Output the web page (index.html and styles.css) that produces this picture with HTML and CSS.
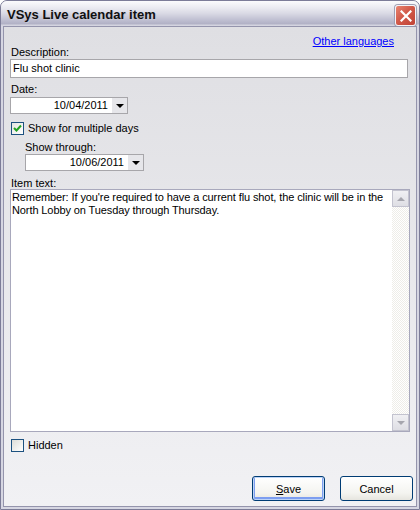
FILE: index.html
```html
<!DOCTYPE html>
<html lang="en">
<head>
    <meta charset="UTF-8">
    <title>VSys Live calendar item</title>
    <link rel="stylesheet" href="styles.css">
</head>
<body>
    <div class="window">
        <div class="titlebar">
            <span class="title">VSys Live calendar item</span>
            <span class="close-btn">
                <svg width="12" height="12" viewBox="0 0 12 12">
                    <path d="M1.5 1.5 L10.5 10.5 M10.5 1.5 L1.5 10.5" stroke="#fff" stroke-width="2.2" stroke-linecap="square"/>
                </svg>
            </span>
        </div>
        <div class="client">
            <div class="desc-head">
                <span class="label">Description:</span>
                <a class="link" href="#">Other languages</a>
            </div>
            <div class="textbox desc-box">Flu shot clinic</div>

            <div class="label date-label">Date:</div>
            <div class="datebox">
                <span class="date-value">10/04/2011</span>
                <span class="drop"><span class="arrow"></span></span>
            </div>

            <div class="check-row multi-row">
                <span class="checkbox checked">
                    <svg width="9" height="9" viewBox="0 0 9 9">
                        <path d="M1 4 L3.5 6.5 L8 1.5" fill="none" stroke="#21a121" stroke-width="2"/>
                    </svg>
                </span>
                <span>Show for multiple days</span>
            </div>

            <div class="indent">
                <div class="label through-label">Show through:</div>
                <div class="datebox">
                    <span class="date-value">10/06/2011</span>
                    <span class="drop"><span class="arrow"></span></span>
                </div>
            </div>

            <div class="label item-label">Item text:</div>
            <div class="memo">
                <div class="memo-text">Remember: If you're required to have a current flu shot, the clinic will be in the North Lobby on Tuesday through Thursday.</div>
                <div class="vscroll">
                    <span class="sb-btn"><span class="sb-up"></span></span>
                    <span class="sb-track"></span>
                    <span class="sb-btn"><span class="sb-down"></span></span>
                </div>
            </div>

            <div class="check-row hidden-row">
                <span class="checkbox"></span>
                <span>Hidden</span>
            </div>

            <div class="button-row">
                <button class="btn btn-default"><u>S</u>ave</button>
                <button class="btn">Cancel</button>
            </div>
        </div>
    </div>
</body>
</html>
```

FILE: styles.css
```css
body {
    margin: 0;
    padding: 0;
    background-color: #ffffff;
    font-family: "Liberation Sans", Arial, sans-serif;
    font-size: 11px;
    color: #000;
}

.window {
    width: 420px;
    height: 510px;
    box-sizing: border-box;
    border: 1px solid #7c7c98;
    border-radius: 7px 7px 0 0;
    background-color: #d6d6e2;
    display: flex;
    flex-direction: column;
}

.titlebar {
    height: 25px;
    display: flex;
    align-items: center;
    justify-content: space-between;
    padding: 0 3px 0 6px;
    border-radius: 6px 6px 0 0;
    background: linear-gradient(#fbfbfd 0%, #ececf2 25%, #d9d9e4 50%, #c0c0d2 75%, #b2b2c6 90%, #dcdce6 100%);
}

.title {
    font-weight: bold;
    font-size: 13px;
    color: #101010;
    text-shadow: 1px 1px 0 #c8c8d4;
    margin-top: 1px;
}

.close-btn {
    width: 19px;
    height: 19px;
    border: 1px solid #f4f4f8;
    border-radius: 3px;
    background: linear-gradient(135deg, #e88470 0%, #d25a4a 45%, #c04236 100%);
    display: flex;
    align-items: center;
    justify-content: center;
    box-shadow: 0 0 0 1px #a0a0b4;
    margin-top: 4px;
}

.client {
    flex: 1;
    margin: 0 2px 2px;
    border: 1px solid #9494ac;
    background: linear-gradient(#dfdfe3, #f1f1f4);
    padding: 9px 3px 0 6px;
    display: flex;
    flex-direction: column;
}

.label {
    line-height: 13px;
}

.desc-head {
    height: 23px;
    display: flex;
    justify-content: space-between;
    width: 384px;
}

.desc-head .label {
    align-self: flex-end;
    padding-left: 1px;
}

.link {
    color: #0000ff;
    text-decoration: underline;
    align-self: flex-start;
    margin-top: -1px;
}

.textbox {
    height: 17px;
    border: 1px solid #a7a6aa;
    background-color: #fff;
    padding: 0 2px;
    line-height: 17px;
    box-sizing: content-box;
}

.desc-box {
    width: 392px;
}

.date-label {
    margin-top: 5px;
    padding-left: 1px;
}

.datebox {
    width: 116px;
    height: 15px;
    margin-top: 1px;
    border: 1px solid #a7a6aa;
    background-color: #fff;
    display: flex;
    align-items: stretch;
}

.date-value {
    flex: 1;
    text-align: right;
    line-height: 15px;
    padding-right: 4px;
}

.drop {
    width: 15px;
    background-color: #e6e6ea;
    display: flex;
    align-items: center;
    justify-content: center;
}

.arrow {
    width: 0;
    height: 0;
    border-left: 4px solid transparent;
    border-right: 4px solid transparent;
    border-top: 4px solid #000;
    margin-top: 1px;
}

.check-row {
    display: flex;
    align-items: center;
    gap: 4px;
    padding-left: 1px;
    line-height: 13px;
}

.multi-row {
    margin-top: 8px;
}

.checkbox {
    width: 11px;
    height: 11px;
    border: 1px solid #1c5180;
    background: linear-gradient(135deg, #dcdcd7, #ffffff);
    display: flex;
    align-items: center;
    justify-content: center;
}

.checkbox.checked {
    background: linear-gradient(135deg, #e4e4e0, #ffffff);
}

.indent {
    padding-left: 15px;
    margin-top: 6px;
}

.through-label {
    line-height: 12px;
}

.indent .datebox {
    width: 117px;
}

.item-label {
    margin-top: 6px;
    line-height: 12px;
    padding-left: 1px;
}

.memo {
    width: 398px;
    height: 241px;
    border: 1px solid #a8a8bc;
    background-color: #fff;
    display: flex;
}

.memo-text {
    flex: 1;
    padding: 1px 3px 0 1px;
    line-height: 13px;
    letter-spacing: -0.1px;
}

.vscroll {
    width: 17px;
    display: flex;
    flex-direction: column;
}

.sb-track {
    flex: 1;
    background: repeating-conic-gradient(#eeede8 0 25%, #ffffff 0 50%) 0 0 / 2px 2px;
}

.sb-btn {
    height: 15px;
    border: 1px solid #c3c3cf;
    background: linear-gradient(#f0f0f3, #dedee4);
    display: flex;
    align-items: center;
    justify-content: center;
}

.sb-up, .sb-down {
    width: 0;
    height: 0;
    border-left: 4px solid transparent;
    border-right: 4px solid transparent;
}

.sb-up {
    border-bottom: 4px solid #a6a6ae;
}

.sb-down {
    border-top: 4px solid #a6a6ae;
}

.hidden-row {
    margin-top: 7px;
}

.button-row {
    display: flex;
    justify-content: flex-end;
    gap: 15px;
    margin-top: auto;
    margin-bottom: 5px;
}

.btn {
    width: 73px;
    height: 25px;
    border: 1px solid #003c74;
    border-radius: 3px;
    background: linear-gradient(#ffffff, #f4f4f0 70%, #e6e5df);
    font-family: "Liberation Sans", Arial, sans-serif;
    font-size: 11px;
    color: #000;
    padding: 0;
}

.btn-default {
    box-shadow: inset 0 0 0 1px #bdd4f7, inset 0 -1px 0 2px #7d9ef0;
}
```
